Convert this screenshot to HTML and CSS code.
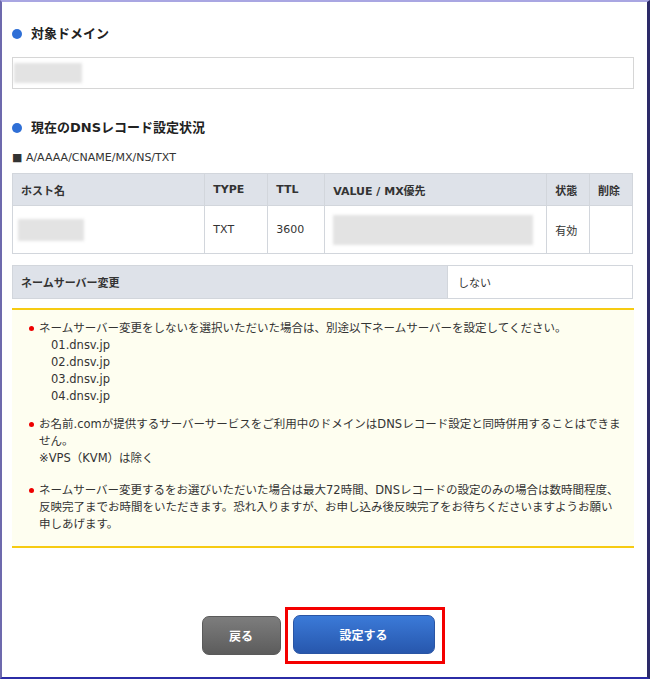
FILE: index.html
```html
<!DOCTYPE html>
<html lang="ja">
<head>
    <meta charset="utf-8">
    <title>DNSレコード設定</title>
    <link rel="stylesheet" href="styles.css">
</head>
<body>
    <div class="frame">
        <h2 class="heading">対象ドメイン</h2>
        <div class="domain-box">
            <div class="blur blur-domain"></div>
        </div>

        <h2 class="heading heading2">現在のDNSレコード設定状況</h2>
        <p class="record-types">■ A/AAAA/CNAME/MX/NS/TXT</p>

        <table class="record-table">
            <tr>
                <th class="col-host">ホスト名</th>
                <th class="col-type">TYPE</th>
                <th class="col-ttl">TTL</th>
                <th class="col-value">VALUE / MX優先</th>
                <th class="col-state">状態</th>
                <th class="col-del">削除</th>
            </tr>
            <tr>
                <td><div class="blur blur-host"></div></td>
                <td>TXT</td>
                <td>3600</td>
                <td><div class="blur blur-value"></div></td>
                <td>有効</td>
                <td></td>
            </tr>
        </table>

        <table class="ns-table">
            <tr>
                <th>ネームサーバー変更</th>
                <td>しない</td>
            </tr>
        </table>

        <div class="notice">
            <ul class="notice-list">
                <li>ネームサーバー変更をしないを選択いただいた場合は、別途以下ネームサーバーを設定してください。
                    <div class="ns-names">
                        01.dnsv.jp<br>
                        02.dnsv.jp<br>
                        03.dnsv.jp<br>
                        04.dnsv.jp
                    </div>
                </li>
                <li class="item-wide">お名前.comが提供するサーバーサービスをご利用中のドメインはDNSレコード設定と同時併用することはできま<br>せん。<br>※VPS（KVM）は除く</li>
                <li>ネームサーバー変更するをお選びいただいた場合は最大72時間、DNSレコードの設定のみの場合は数時間程度、<br>反映完了までお時間をいただきます。恐れ入りますが、お申し込み後反映完了をお待ちくださいますようお願い<br>申しあげます。</li>
            </ul>
        </div>

        <div class="buttons">
            <button class="btn btn-back">戻る</button>
            <div class="highlight">
                <button class="btn btn-submit">設定する</button>
            </div>
        </div>
    </div>
</body>
</html>
```

FILE: styles.css
```css
* {
    margin: 0;
    padding: 0;
    box-sizing: border-box;
}

body {
    font-family: "DejaVu Sans", "Noto Sans CJK JP", sans-serif;
    color: #333;
    background: #fff;
}

.frame {
    width: 650px;
    height: 679px;
    border-left: 2px solid #6d69ad;
    border-top: 2px solid #a9a6e2;
    border-right: 3px solid #2c2a68;
    border-bottom: 2px solid #2b2ca6;
    padding: 22px 13px 0 10px;
}

.heading {
    font-size: 13px;
    font-weight: bold;
    color: #222;
    line-height: 20px;
    padding-left: 19px;
    position: relative;
}

.heading::before {
    content: '';
    position: absolute;
    left: 0;
    top: 5px;
    width: 10px;
    height: 10px;
    border-radius: 50%;
    background: #2f6fd6;
}

.domain-box {
    margin-top: 13px;
    height: 32px;
    border: 1px solid #d6d6d6;
    padding: 5px 1px;
}

.blur {
    background: #e3e3e3;
    filter: blur(1.5px);
}

.blur-domain {
    width: 68px;
    height: 20px;
}

.heading2 {
    margin-top: 29px;
}

.record-types {
    margin-top: 12px;
    font-size: 11px;
    line-height: 16px;
    color: #333;
}

.record-table {
    margin-top: 7px;
    width: 621px;
    border-collapse: collapse;
    font-size: 11px;
}

.record-table th,
.record-table td,
.ns-table th,
.ns-table td {
    border: 1px solid #d2d6dc;
    text-align: left;
    padding: 0 8px;
}

.record-table th {
    background: #dee2e9;
    height: 32px;
    font-weight: bold;
    color: #333;
}

.record-table td {
    height: 48px;
}

.col-host { width: 193px; }
.col-type { width: 63px; }
.col-ttl { width: 57px; }
.col-value { width: 222px; }
.col-state { width: 43px; }
.col-del { width: 43px; }

.blur-host {
    width: 66px;
    height: 22px;
    margin-left: -3px;
}

.blur-value {
    width: 200px;
    height: 30px;
}

.ns-table {
    margin-top: 11px;
    width: 621px;
    border-collapse: collapse;
    font-size: 11px;
}

.ns-table th {
    width: 435px;
    height: 33px;
    background: #dee2e9;
    font-weight: bold;
}

.ns-table td {
    background: #fff;
    padding-left: 10px;
}

.notice {
    margin-top: 9px;
    width: 622px;
    background: #fefef0;
    border-top: 2px solid #f6cb12;
    border-bottom: 2px solid #f6cb12;
    padding: 10px 0 13px 27px;
    font-size: 11.5px;
    line-height: 17px;
}

.notice-list {
    list-style: none;
}

.notice-list li {
    position: relative;
    margin-bottom: 11px;
}

.notice-list li:last-child {
    margin-bottom: 0;
}

.notice-list li::before {
    content: '';
    position: absolute;
    left: -10px;
    top: 6px;
    width: 5px;
    height: 5px;
    border-radius: 50%;
    background: #e00;
}

.notice-list .item-wide {
    margin-bottom: 15px;
}

.ns-names {
    padding-left: 12px;
}

.buttons {
    margin-top: 59px;
    display: flex;
    justify-content: center;
    align-items: center;
    gap: 4px;
}

.btn {
    font-family: "Noto Sans CJK JP", sans-serif;
    font-size: 12px;
    font-weight: bold;
    color: #fff;
    height: 39px;
    border-radius: 7px;
    cursor: pointer;
}

.btn-back {
    width: 79px;
    background: linear-gradient(#7d7d7d, #5c5c5c);
    border: 1px solid #5a5a5a;
}

.highlight {
    border: 3px solid #f40000;
    padding: 5px 7px 7px 5px;
}

.btn-submit {
    width: 142px;
    background: linear-gradient(#3b7ad8, #2757ad);
    border: 1px solid #2a55a4;
}
```
